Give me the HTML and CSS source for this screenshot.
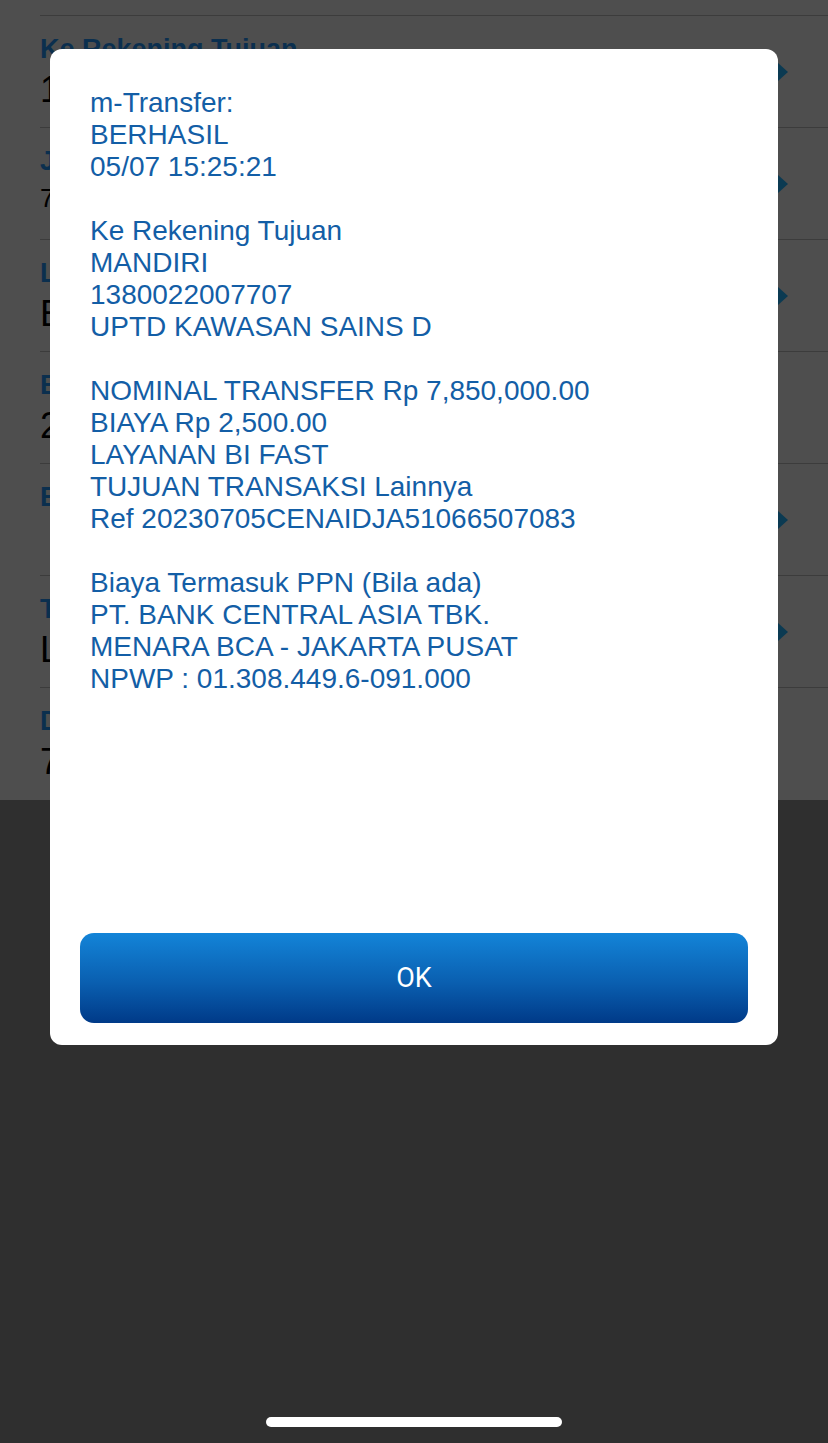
FILE: index.html
```html
<!DOCTYPE html>
<html>
<head>
<meta charset="utf-8">
<link rel="stylesheet" href="styles.css">
</head>
<body>
<div class="screen">
  <div class="list">
    <div class="row top"></div>
    <div class="row"><div class="label">Ke Rekening Tujuan</div><div class="value">1380022007707</div><span class="chev"></span></div>
    <div class="row"><div class="label">Jenis Transfer</div><div class="value small">7,850,000.00</div><span class="chev"></span></div>
    <div class="row"><div class="label">Layanan Transfer</div><div class="value">BI FAST</div><span class="chev"></span></div>
    <div class="row"><div class="label">Biaya</div><div class="value">2,500.00</div></div>
    <div class="row"><div class="label">Berita</div><div class="value"></div><span class="chev"></span></div>
    <div class="row"><div class="label">Tujuan Transaksi</div><div class="value">Lainnya</div><span class="chev"></span></div>
    <div class="row last"><div class="label">Dari Rekening</div><div class="value">7</div></div>
  </div>
  <div class="bottom">
    <div class="home"></div>
  </div>
  <div class="modal">
    <div class="msg">
      <p>m-Transfer:<br>BERHASIL<br>05/07 15:25:21</p>
      <p>Ke Rekening Tujuan<br>MANDIRI<br>1380022007707<br>UPTD KAWASAN SAINS D</p>
      <p>NOMINAL TRANSFER Rp 7,850,000.00<br>BIAYA Rp 2,500.00<br>LAYANAN BI FAST<br>TUJUAN TRANSAKSI Lainnya<br>Ref 20230705CENAIDJA51066507083</p>
      <p>Biaya Termasuk PPN (Bila ada)<br>PT. BANK CENTRAL ASIA TBK.<br>MENARA BCA - JAKARTA PUSAT<br>NPWP : 01.308.449.6-091.000</p>
    </div>
    <button class="ok">OK</button>
  </div>
</div>
</body>
</html>
```
FILE: styles.css
```css
html, body { margin: 0; padding: 0; }
body { width: 828px; height: 1443px; overflow: hidden; font-family: "Liberation Sans", Arial, sans-serif; }
.screen { position: relative; width: 828px; height: 1443px; background: #2f2f2f; }
.list { background: #4e4e4e; height: 800px; overflow: hidden; }
.row { position: relative; height: 111px; margin-left: 40px; border-bottom: 1px solid #3c3c3c; }
.row.top { height: 15px; }
.row.last { border-bottom: none; }
.label { padding-top: 18px; font-size: 27px; font-weight: bold; color: #0b2f4e; line-height: 30px; white-space: nowrap; }
.value { margin-top: 6px; font-size: 36px; color: #000; line-height: 40px; white-space: nowrap; }
.value.small { font-size: 26px; line-height: 32px; }
.chev { position: absolute; right: 40px; top: 47px; width: 0; height: 0; border-top: 9px solid transparent; border-bottom: 9px solid transparent; border-left: 10px solid #0b3a52; }
.bottom { height: 643px; display: flex; align-items: flex-end; justify-content: center; }
.home { width: 296px; height: 10px; border-radius: 5px; background: #fff; margin-bottom: 16px; }
.modal { position: absolute; left: 50px; top: 49px; width: 728px; height: 996px; background: #fff; border-radius: 12px; box-sizing: border-box; padding: 38px 30px 22px 30px; display: flex; flex-direction: column; }
.msg { flex: 1; padding-left: 10px; color: #135ea6; font-size: 28px; line-height: 32px; }
.msg p { margin: 0 0 32px 0; white-space: nowrap; }
.ok { height: 90px; border: none; border-radius: 14px; background: linear-gradient(#1384d8, #0a5fb0 55%, #003a88); color: #fff; font-family: Roboto, "Liberation Sans", sans-serif; font-size: 27px; padding: 0; }
```
